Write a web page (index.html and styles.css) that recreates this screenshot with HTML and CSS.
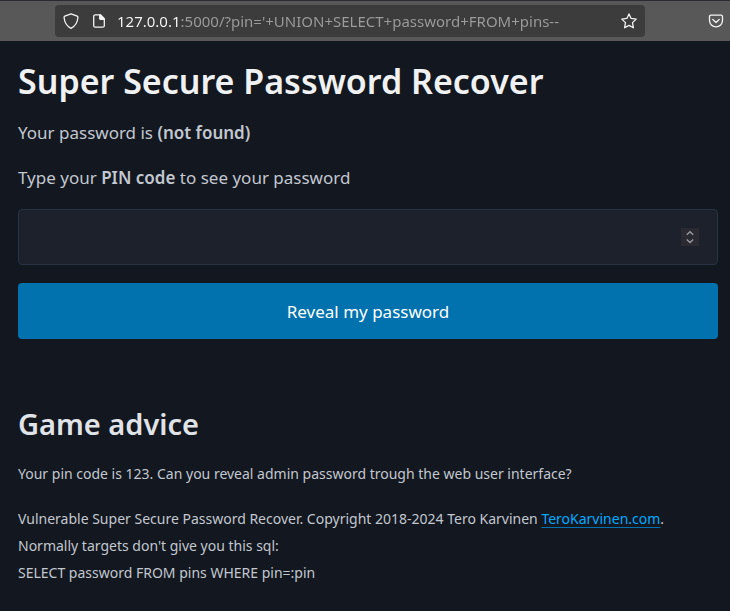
FILE: index.html
```html
<!DOCTYPE html>
<html lang="en">
<head>
<meta charset="utf-8">
<meta name="viewport" content="width=device-width, initial-scale=1">
<title>Super Secure Password Recover</title>
<link rel="stylesheet" href="styles.css">
</head>
<body>
<header class="toolbar">
  <div class="address">
    <svg class="icon" viewBox="0 0 16 16" aria-hidden="true"><path d="M8 .8 14.2 3.2C14.8 3.5 15 3.9 14.9 4.5C14.6 9 13.2 12.6 8 15.3C2.8 12.6 1.4 9 1.1 4.5C1 3.9 1.2 3.5 1.8 3.2Z"/></svg>
    <svg class="icon icon-page" viewBox="0 0 16 16" aria-hidden="true"><path d="M9.5 1.8H4.2Q2.7 1.8 2.7 3.3V12.7Q2.7 14.2 4.2 14.2H11.8Q13.3 14.2 13.3 12.7V5.6Z"/><path class="fill" d="M8.7 1.8 13.3 6.4H9.7Q8.7 6.4 8.7 5.4Z"/></svg>
    <input class="url" type="text" aria-label="Address" value="127.0.0.1:5000/?pin='+UNION+SELECT+password+FROM+pins--">
    <svg class="icon" viewBox="0 0 16 16" aria-hidden="true"><path d="M8 .9 10.1 5.4 15.2 6.1 11.5 9.6 12.4 14.8 8 12.4 3.6 14.8 4.5 9.6 .8 6.1 5.9 5.4Z"/></svg>
  </div>
  <svg class="icon icon-pocket" viewBox="0 0 16 16" aria-hidden="true"><path d="M3 2.2H13Q14.5 2.2 14.5 3.7V7.3C14.5 11 11.7 13.8 8 13.8C4.3 13.8 1.5 11 1.5 7.3V3.7Q1.5 2.2 3 2.2Z"/><path d="M4.8 6.5 8 9.5 11.2 6.5"/></svg>
</header>
<main class="page">
  <h1>Super Secure Password Recover</h1>
  <p>Your password is <strong>(not found)</strong></p>
  <form>
    <label for="pin">Type your <strong>PIN code</strong> to see your password</label>
    <div class="field">
      <input class="pin" id="pin" type="number" name="pin">
      <svg class="stepper" viewBox="0 0 18 18" aria-hidden="true"><path d="M5.8 6.8 9 3.8 12.2 6.8M5.8 11.5 9 14.5 12.2 11.5"/></svg>
    </div>
    <button class="reveal" type="submit">Reveal my password</button>
  </form>
  <section class="advice">
    <h2>Game advice</h2>
    <p class="small">Your pin code is 123. Can you reveal admin password trough the web user interface?</p>
    <p class="small">Vulnerable Super Secure Password Recover. Copyright 2018-2024 Tero Karvinen <a href="#">TeroKarvinen.com</a>.<br>Normally targets don't give you this sql:<br>SELECT password FROM pins WHERE pin=:pin</p>
  </section>
</main>
</body>
</html>
```

FILE: styles.css
```css
* { box-sizing: border-box; }
body {
  margin: 0;
  background: #13171f;
  color: #c2c7d0;
  font: 17px/27px "Noto Sans", sans-serif;
}
.toolbar {
  display: flex;
  align-items: center;
  justify-content: space-between;
  height: 41px;
  padding: 0 6px 0 55px;
  border-top: 1px solid #2b2a33;
  background: #585858;
}
.address {
  display: flex;
  align-items: center;
  flex: 0 1 590px;
  height: 32px;
  padding: 0 8px;
  border-radius: 4px;
  background: #3c3c3c;
}
.icon {
  flex: none;
  width: 16px;
  height: 16px;
  fill: none;
  stroke: #f4f4f4;
  stroke-width: 1.3;
  stroke-linejoin: round;
  stroke-linecap: round;
}
.icon-page { margin-left: 12px; }
.fill { fill: #f4f4f4; }
.url {
  flex: 1;
  min-width: 0;
  margin: 0 10px;
  padding: 0;
  border: 0;
  outline: 0;
  background: linear-gradient(90deg, #fbfbfe 61px, #9c9c9c 61px);
  background-clip: text;
  -webkit-background-clip: text;
  -webkit-text-fill-color: transparent;
  color: #fbfbfe;
  font: 15px/24px "Noto Sans", sans-serif;
}
.page { padding: 18px 12px 24px 18px; }
h1, h2, p { margin: 0 0 18px; }
h1 {
  color: #f0f1f3;
  font-size: 34px;
  line-height: 45px;
  font-weight: 600;
  margin-bottom: 15px;
}
h2 {
  color: #e0e3e7;
  font-size: 29px;
  line-height: 36px;
  font-weight: 600;
}
strong { font-weight: 600; }
label { display: block; }
.field {
  position: relative;
  margin: 18px 0;
}
.pin {
  display: block;
  width: 100%;
  height: 56px;
  padding: 0 18px;
  border: 1px solid #2a3140;
  border-radius: 4px;
  background: #1c212c;
  color: #e0e3e7;
  font: inherit;
  appearance: textfield;
}
.pin::-webkit-inner-spin-button { appearance: none; }
.stepper {
  position: absolute;
  top: 19px;
  right: 19px;
  width: 18px;
  height: 18px;
  background: #2b2a33;
  fill: none;
  stroke: #9a9aa2;
  stroke-width: 1.4;
  pointer-events: none;
}
.reveal {
  display: block;
  width: 100%;
  height: 56px;
  border: 0;
  border-radius: 4px;
  background: #0172ad;
  color: #fff;
  font: inherit;
}
.advice { margin-top: 67px; }
.small { font-size: 14px; }
a {
  color: #01aaff;
  text-decoration-color: #0172ad;
  text-underline-offset: 3px;
}
```
